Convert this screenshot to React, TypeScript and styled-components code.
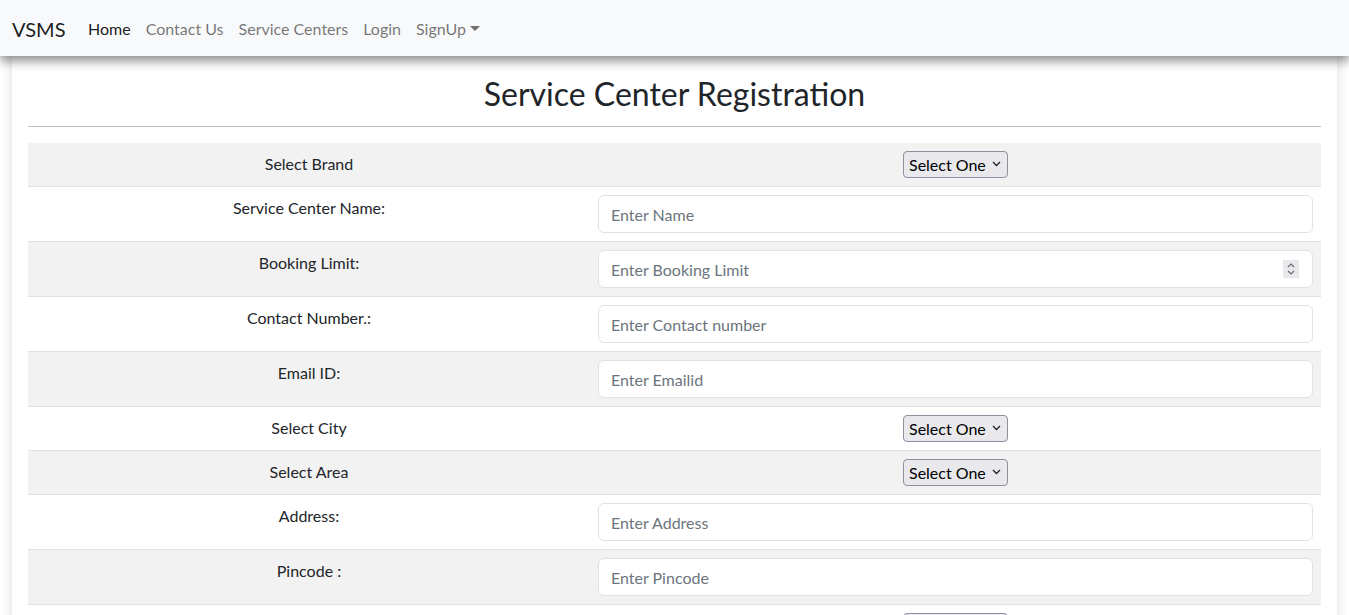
import React from "react";
import styled, { createGlobalStyle } from "styled-components";

const Global = createGlobalStyle`
  html { scrollbar-width: none; }
  html::-webkit-scrollbar { width: 0; height: 0; }
  body {
    margin: 0;
    font-family: "Segoe UI", Lato, "Noto Sans", sans-serif;
    font-size: 16px;
    line-height: 1.5;
    color: #212529;
    background: #fff;
  }
  * { box-sizing: border-box; }
`;

const Navbar = styled.nav`
  position: relative;
  z-index: 2;
  height: 56px;
  background: #f8f9fa;
  display: flex;
  align-items: center;
  padding: 2px 12px 0;
  box-shadow: 0 5px 10px rgba(0, 0, 0, 0.45);
`;

const Brand = styled.a`
  font-size: 20px;
  line-height: 30px;
  color: rgba(0, 0, 0, 0.9);
  margin-right: 15px;
  text-decoration: none;
`;

const NavList = styled.div`
  display: flex;
  align-items: center;
`;

const NavLink = styled.a<{ $active?: boolean }>`
  padding: 8px 7.5px;
  color: ${(p) => (p.$active ? "rgba(0,0,0,0.9)" : "rgba(0,0,0,0.55)")};
  text-decoration: none;
  display: inline-flex;
  align-items: center;
`;

const Caret = styled.span`
  display: inline-block;
  margin-left: 4px;
  width: 0;
  height: 0;
  border-top: 5px solid currentColor;
  border-left: 5px solid transparent;
  border-right: 5px solid transparent;
  transform: translateY(-1px);
`;

const Card = styled.main`
  position: relative;
  z-index: 1;
  margin: 0 12px;
  padding: 19px 16px 16px;
  background: #fff;
  box-shadow: 0 0 12px rgba(0, 0, 0, 0.14);
`;

const Title = styled.h2`
  margin: 0;
  text-align: center;
  font-size: 32px;
  font-weight: 400;
  line-height: 38px;
`;

const Rule = styled.hr`
  margin: 13px 0 16px;
  border: 0;
  border-top: 1px solid #bfbfbf;
`;

const Table = styled.div`
  display: grid;
  grid-template-columns: 562px 1fr;
`;

const Cell = styled.div<{ $striped: boolean }>`
  padding: 8px;
  background: ${(p) => (p.$striped ? "#f2f2f2" : "#fff")};
  border-bottom: 1px solid #dee2e6;
  text-align: center;
  display: flex;
  justify-content: center;
  align-items: flex-start;
`;

const Label = styled.span`
  padding-top: 1px;
`;

const Input = styled.input`
  width: 100%;
  height: 38px;
  padding: 6px 12px;
  font: inherit;
  color: #212529;
  background: #fff;
  border: 1px solid #dee2e6;
  border-radius: 6px;
  outline: none;
  &::placeholder { color: #6c757d; }
`;

const InputWrap = styled.div`
  position: relative;
  width: 100%;
`;

const Spinner = styled.svg`
  position: absolute;
  right: 14px;
  top: 10px;
`;

const SelectWrap = styled.span`
  position: relative;
  display: inline-block;
`;

const Select = styled.select`
  appearance: none;
  -webkit-appearance: none;
  font: inherit;
  font-size: 16px;
  height: 27px;
  padding: 0 21px 0 5px;
  color: #000;
  background: #e9e9ed;
  border: 1px solid #8f8f9d;
  border-radius: 4px;
  display: block;
`;

const Chevron = styled.svg`
  position: absolute;
  right: 7px;
  top: 10px;
  pointer-events: none;
`;

type Row = { label: string; kind: "select" | "input" | "number"; placeholder?: string };

const rows: Row[] = [
  { label: "Select Brand", kind: "select" },
  { label: "Service Center Name:", kind: "input", placeholder: "Enter Name" },
  { label: "Booking Limit:", kind: "number", placeholder: "Enter Booking Limit" },
  { label: "Contact Number.:", kind: "input", placeholder: "Enter Contact number" },
  { label: "Email ID:", kind: "input", placeholder: "Enter Emailid" },
  { label: "Select City", kind: "select" },
  { label: "Select Area", kind: "select" },
  { label: "Address:", kind: "input", placeholder: "Enter Address" },
  { label: "Pincode :", kind: "input", placeholder: "Enter Pincode" },
  { label: "Select Type", kind: "select" },
  { label: "Password:", kind: "input", placeholder: "Enter Password" },
];

export default function App() {
  return (
    <>
      <Global />
      <Navbar>
        <Brand href="#">VSMS</Brand>
        <NavList>
          <NavLink $active href="#">Home</NavLink>
          <NavLink href="#">Contact Us</NavLink>
          <NavLink href="#">Service Centers</NavLink>
          <NavLink href="#">Login</NavLink>
          <NavLink href="#">
            SignUp<Caret />
          </NavLink>
        </NavList>
      </Navbar>
      <Card>
        <Title>Service Center Registration</Title>
        <Rule />
        <Table>
          {rows.map((r, i) => {
            const striped = i % 2 === 0;
            return (
              <React.Fragment key={r.label}>
                <Cell $striped={striped}>
                  <Label>{r.label}</Label>
                </Cell>
                <Cell $striped={striped}>
                  {r.kind === "select" ? (
                    <SelectWrap>
                      <Select defaultValue="">
                        <option value="">Select One</option>
                      </Select>
                      <Chevron width="9" height="6" viewBox="0 0 9 6">
                        <path d="M1 1l3.5 3.5L8 1" fill="none" stroke="#222" strokeWidth="1.3" />
                      </Chevron>
                    </SelectWrap>
                  ) : r.kind === "number" ? (
                    <InputWrap>
                      <Input type="text" placeholder={r.placeholder} />
                      <Spinner width="16" height="18" viewBox="0 0 16 18">
                        <rect width="16" height="18" fill="#e9e9ed" />
                        <path d="M5 7l3-3 3 3" fill="none" stroke="#6b6b75" strokeWidth="1.2" />
                        <path d="M5 11l3 3 3-3" fill="none" stroke="#6b6b75" strokeWidth="1.2" />
                      </Spinner>
                    </InputWrap>
                  ) : (
                    <Input type="text" placeholder={r.placeholder} />
                  )}
                </Cell>
              </React.Fragment>
            );
          })}
        </Table>
      </Card>
    </>
  );
}
